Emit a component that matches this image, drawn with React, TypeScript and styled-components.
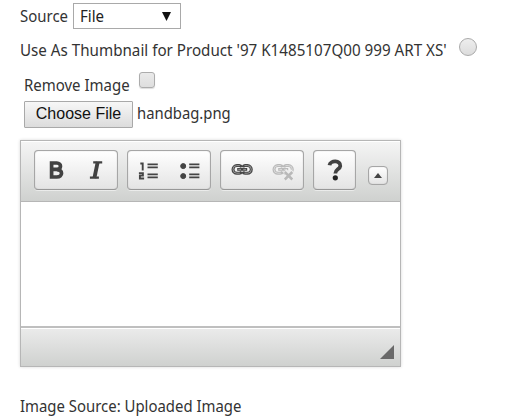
import React from "react";
import styled, { createGlobalStyle } from "styled-components";

const GlobalStyle = createGlobalStyle`
  * { box-sizing: border-box; }
  body { margin: 0; background: #fff; color: #333; font-family: "Noto Sans", sans-serif; font-size: 15.5px; }
`;
const Form = styled.main`width: 517px; height: 418px; padding-left: 20px; overflow: hidden;`;
const Row = styled.div<{ $height: number; $indent?: number }>`
  display: flex;
  align-items: center;
  height: ${p => p.$height}px;
  padding-left: ${p => p.$indent ?? 0}px;
  white-space: nowrap;
`;
const Label = styled.span<{ $width: number; $scale: number; $top?: number }>`
  flex: none;
  width: ${p => p.$width}px;
  line-height: 22px;
  margin-top: ${p => p.$top ?? 0}px;
  white-space: nowrap;
  transform: scaleX(${p => p.$scale});
  transform-origin: left center;
`;
const Select = styled.button`
  display: flex; align-items: center; justify-content: space-between;
  width: 108px; height: 26px; margin: 0; padding: 0 8px 0 6px;
  border: 1px solid #a9a9a9; background: #fff; color: #222;
  font: 15.5px "Noto Sans", sans-serif;
`;
const Value = styled.span`transform: scaleX(.97); transform-origin: left;`;
const Radio = styled.span`
  width: 18px; height: 18px; margin: -8px 0 0 12px; border-radius: 50%;
  border: 1px solid #aaa; background: linear-gradient(#eee, #dcdcdc);
`;
const Checkbox = styled.span`
  width: 16px; height: 16px; margin: -9px 0 0 9px; border-radius: 3px;
  border: 1px solid #acacac; background: linear-gradient(#eaeaea, #dedede);
  box-shadow: 0 1px 1px #ddd;
`;
const FileButton = styled.button`
  width: 109px; height: 27px; margin: 0 4px 0 0; padding: 0 0 1px;
  border: 1px solid #a9a9a9; border-radius: 1px;
  background: linear-gradient(#f7f7f7, #dcdcdc); color: #111;
  font: 16px "Liberation Sans", sans-serif;
`;
const Editor = styled.section`
  width: 381px; height: 227px; margin-top: 12px;
  border: 1px solid #b6b6b6; box-shadow: 0 0 3px rgba(0,0,0,.16);
  display: flex; flex-direction: column;
`;
const Toolbar = styled.div`
  flex: none; height: 61px; padding: 9px 12px 0 13px;
  display: flex; align-items: flex-start; gap: 9px;
  border-bottom: 1px solid #b6b6b6;
  background: linear-gradient(#f5f5f5, #cfd1cf); box-shadow: inset 0 1px #fff;
`;
const Group = styled.div<{ $width: number }>`
  display: flex; flex: none; width: ${p => p.$width}px; height: 40px;
  border: 1px solid #a6a6a6; border-bottom-color: #979797; border-radius: 4px;
  background: linear-gradient(#fff, #e4e4e4);
  box-shadow: inset 0 0 1px #aaa, 0 1px rgba(255,255,255,.5);
`;
const Tool = styled.button`
  display: flex; flex: 1; align-items: center; justify-content: center;
  margin: 0; padding: 0; border: 0; background: none;
  svg { display: block; width: 40px; height: 38px; }
`;
const Collapse = styled.button`
  display: flex; align-items: center; justify-content: center;
  width: 20px; height: 19px; margin: 16px 0 0 auto; padding: 0;
  border: 1px solid #a6a6a6; border-radius: 4px;
  background: linear-gradient(#fff, #e4e4e4); box-shadow: inset 0 0 1px #aaa;
`;
const Content = styled.div`flex: 1; background: #fff;`;
const Footer = styled.div`
  flex: none; height: 40px; padding: 0 6px 7px; display: flex; justify-content: flex-end; align-items: flex-end;
  border-top: 2px solid #bfbfbf; background: linear-gradient(#ebebeb, #cfd1cf);
  box-shadow: inset 0 1px #fff;
`;

function BoldIcon() {
  return <svg viewBox="0 0 40 38" fill="none" stroke="#424242" strokeWidth="3.7"><path d="M15.6 10.3v17.4M14 12h6.8c4.9 0 4.9 6.3 0 6.3h-5.5m5.5.3c6.3 0 6.3 7.4 0 7.4H14" /></svg>;
}
function ItalicIcon() {
  return <svg viewBox="0.5 0 40 38" fill="none" stroke="#424242"><path strokeWidth="3.8" d="m21.2 11-3.3 16" /><path strokeWidth="2.4" d="M16.7 11.4h9M13.4 26.6h9" /></svg>;
}
function NumberedIcon() {
  return <svg viewBox="1.2 0.7 40 38" fill="none" stroke="#444" strokeWidth="1.9"><path d="M12.5 13.2h2.4v7M11.1 22.8h4v2.4h-3v3h4.2" /><path strokeWidth="1.7" d="M19.7 14H30m-10.3 3.1H30m-10.3 6.9H30m-10.3 3.1H30" /></svg>;
}
function BulletedIcon() {
  return <svg viewBox="0.8 0.7 40 38" fill="#444" stroke="#444"><circle cx="14" cy="15.8" r="2.5" /><circle cx="14" cy="25.8" r="2.5" /><path strokeWidth="1.7" d="M20 14h10.2M20 17.1h10.2M20 24h10.2M20 27.1h10.2" /></svg>;
}
function ChainIcon({ broken = false }: { broken?: boolean }) {
  return <svg viewBox="0.2 1 40 38" fill="none" stroke={broken ? "#b9b9b9" : "#454545"}>
    <path strokeWidth="3" d="M19.7 17.2c-.4-1-1.1-1.6-2.2-1.6H15a3.8 3.8 0 0 0 0 7.6h2.5c1.1 0 1.8-.6 2.2-1.6M21 17.2c.4-1 1.1-1.6 2.2-1.6h2.5a3.8 3.8 0 0 1 0 7.6h-2.5c-1.1 0-1.8-.6-2.2-1.6" />
    <path strokeWidth="2.8" d="M15.4 19.4h10" />
    <path stroke={broken ? "#dedede" : "#a0a0a0"} strokeWidth=".9" d="M18 15.6h-3a3.8 3.8 0 0 0 0 7.6h3M22.7 15.6h3a3.8 3.8 0 0 1 0 7.6h-3M16.5 19.4h2.7m2.3 0h2.7" />
    {broken && <><path stroke="#eee" strokeWidth="5" d="m22 21 8 8m0-8-8 8" /><path strokeWidth="2.5" d="m22 22 7.5 7.5m0-7.5L22 29.5" /></>}
  </svg>;
}
function HelpIcon() {
  return <svg viewBox="0 0 40 38" fill="none" stroke="#424242"><path strokeWidth="3.8" d="M14.5 14.3c.8-5.5 11.5-5 10.8.6-.5 3.5-5 3.5-5 7.5" /><circle cx="20.3" cy="26.8" r="2.6" fill="#222" stroke="none" /></svg>;
}

export default function App() {
  return <><GlobalStyle /><Form>
    <Row $height={32}><Label $width={53} $scale={.965}>Source</Label><Select><Value>File</Value><svg width="10" height="10"><path d="M0 1h9L4.5 10z" fill="#111" /></svg></Select></Row>
    <Row $height={37}><Label $width={427} $scale={.979} $top={-2}>Use As Thumbnail for Product '97 K1485107Q00 999 ART XS'</Label><Radio /></Row>
    <Row $height={31} $indent={4}><Label $width={106} $scale={.966}>Remove Image</Label><Checkbox /></Row>
    <Row $height={28} $indent={4}><FileButton>Choose File</FileButton><Label $width={100} $scale={.957} $top={-2}>handbag.png</Label></Row>
    <Editor>
      <Toolbar>
        <Group $width={84}><Tool aria-label="Bold"><BoldIcon /></Tool><Tool aria-label="Italic"><ItalicIcon /></Tool></Group>
        <Group $width={84}><Tool aria-label="Numbered list"><NumberedIcon /></Tool><Tool aria-label="Bulleted list"><BulletedIcon /></Tool></Group>
        <Group $width={84}><Tool aria-label="Link"><ChainIcon /></Tool><Tool aria-label="Unlink"><ChainIcon broken /></Tool></Group>
        <Group $width={43}><Tool aria-label="Help"><HelpIcon /></Tool></Group>
        <Collapse aria-label="Collapse toolbar"><svg width="8" height="5"><path d="M0 5 4 0l4 5z" fill="#444" /></svg></Collapse>
      </Toolbar>
      <Content />
      <Footer><svg width="14" height="14"><path d="M14 0v14H0z" fill="#696969" /></svg></Footer>
    </Editor>
    <Row $height={78}><Label $width={230} $scale={.962}>Image Source: Uploaded Image</Label></Row>
  </Form></>;
}
